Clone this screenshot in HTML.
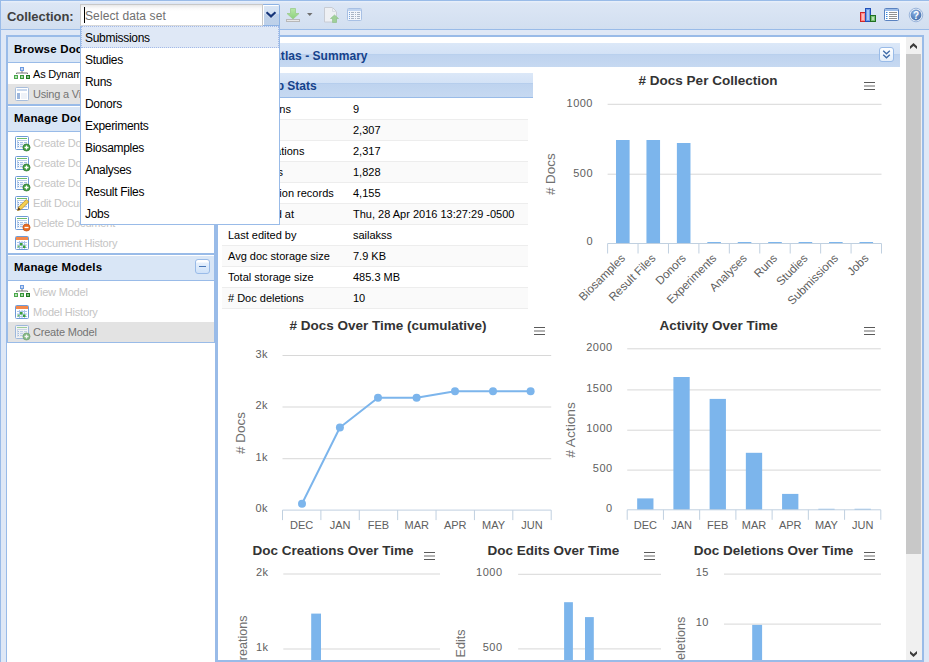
<!DOCTYPE html><html><head><meta charset="utf-8"><style>
*{box-sizing:border-box;margin:0;padding:0}
html,body{width:929px;height:662px;overflow:hidden;background:#dfe8f6;font-family:"Liberation Sans",sans-serif;position:relative}
.a{position:absolute}
.t{position:absolute;white-space:nowrap;line-height:1}
svg{position:absolute;overflow:visible}
</style></head><body>
<div class="a" style="left:0px;top:0px;width:929px;height:30px;border-top:1px solid #99bbe8;border-bottom:1px solid #99bbe8;background:linear-gradient(#e6eefa 0,#e6eefa 1px,#dce6f5 2px,#d2dff0)"></div>
<div class="a" style="left:0px;top:0px;width:1px;height:662px;background:#99bbe8"></div>
<div class="t" style="left:7px;top:10px;font-size:13px;font-weight:bold;color:#404040;letter-spacing:-0.05px">Collection:</div>
<div class="a" style="left:80px;top:4px;width:183px;height:22px;border:1px solid #c8c8c8;border-bottom:1px solid #d8d8d8;border-right:1px solid #c8c8c8;background:linear-gradient(#e8e8e8 0,#f8f8f8 3px,#fff 6px)"></div>
<div class="t" style="left:85px;top:10px;font-size:12px;color:#707070;letter-spacing:0.1px">Select data set</div>
<div class="a" style="left:84px;top:7px;width:1px;height:16px;background:#000"></div>
<div class="a" style="left:263px;top:4px;width:17px;height:22px;background:linear-gradient(#dae6f5 0,#d2e0f2 45%,#bed1ea 46%,#bdd0e9 100%);border:1px solid #8db2e3;border-left:none;box-shadow:inset 1px 1px 0 #fff;border-radius:0 2px 0 0"></div>
<svg style="left:265px;top:11px" width="12" height="8"><path d="M1.5 1.5l4.5 4 4.5-4" stroke="#fff" stroke-width="3" fill="none" opacity=".7"/><path d="M1.5 1.2l4.5 4.2 4.5-4.2" stroke="#15357a" stroke-width="2.2" fill="none"/></svg>
<div class="a" style="left:6px;top:35px;width:210px;height:627px;border-left:1px solid #99bbe8;border-right:1px solid #99bbe8;border-top:1px solid #99bbe8;background:#fff"></div>
<div class="a" style="left:7px;top:36px;width:208px;height:307px;border:1px solid #99bbe8;border-top:none;background:#fff"></div>
<div class="a" style="left:7px;top:35px;width:208px;height:2px;background:#99bbe8"></div>
<div class="a" style="left:7px;top:37px;width:208px;height:25px;background:#d9e6f6;border-left:1px solid #99bbe8;border-right:1px solid #99bbe8"></div>
<div class="a" style="left:7px;top:62px;width:208px;height:1px;background:#99bbe8"></div>
<div class="t" style="left:14px;top:44px;font-size:11.5px;font-weight:bold;color:#000;letter-spacing:0.2px">Browse Documents</div>
<svg style="left:14px;top:66px" width="18" height="16"><rect x="6.5" y="1.5" width="3" height="3" fill="#c8d4f0" stroke="#6a9ae0" stroke-width="1"/><path d="M2.5 8V7h11v1M8 5v2" stroke="#777" stroke-width="1" fill="none"/><rect x="0.5" y="9.5" width="3" height="3" fill="#b8e0b8" stroke="#4aa84a" stroke-width="1"/><rect x="6.5" y="9.5" width="3" height="3" fill="#a8d8a8" stroke="#3a983a" stroke-width="1"/><rect x="12.5" y="9.5" width="3" height="3" fill="#88c088" stroke="#207820" stroke-width="1"/></svg>
<div class="t" style="left:33px;top:69px;font-size:11px;color:#000;letter-spacing:-0.2px">As Dynamic Tree</div>
<div class="a" style="left:8px;top:84px;width:206px;height:20px;background:#e3e3e3"></div>
<svg style="left:15px;top:87px" width="16" height="16"><rect x="0.5" y="0.5" width="13" height="13" rx="1" fill="#fff" stroke="#a8bedc"/><rect x="2" y="2" width="10" height="2" fill="#c8d8ee"/><rect x="2" y="6" width="3" height="6" fill="#9cb6dc"/><rect x="6" y="6" width="6" height="6" fill="#eef2f8"/></svg>
<div class="t" style="left:33px;top:89px;font-size:11px;color:#747474;letter-spacing:-0.2px">Using a View</div>
<div class="a" style="left:7px;top:104px;width:208px;height:2px;background:#99bbe8"></div>
<div class="a" style="left:8px;top:106px;width:206px;height:1px;background:#fff"></div>
<div class="a" style="left:7px;top:107px;width:208px;height:24px;background:#d9e6f6;border-left:1px solid #99bbe8;border-right:1px solid #99bbe8"></div>
<div class="a" style="left:7px;top:131px;width:208px;height:1px;background:#99bbe8"></div>
<div class="t" style="left:14px;top:113px;font-size:11.5px;font-weight:bold;color:#000;letter-spacing:0.2px">Manage Documents</div>
<svg style="left:15px;top:136px;opacity:1" width="16" height="16"><rect x="0.5" y="0.5" width="13" height="13" rx="1" fill="#fff" stroke="#6e9ad6"/><rect x="2" y="2" width="10" height="1" fill="#6cbc6c"/><rect x="2" y="4" width="10" height="1" fill="#b8cdea"/><rect x="2" y="4" width="1" height="8" fill="#b8cdea"/><rect x="3" y="6" width="1" height="1" fill="#7aa4dc"/><rect x="3" y="8" width="1" height="1" fill="#7aa4dc"/><rect x="3" y="10" width="1" height="1" fill="#7aa4dc"/><rect x="5" y="6" width="3" height="1" fill="#a8c2e8"/><rect x="5" y="8" width="3" height="1" fill="#a8c2e8"/><rect x="5" y="10" width="3" height="1" fill="#a8c2e8"/><rect x="9" y="6" width="3" height="1" fill="#a8c2e8"/><rect x="9" y="8" width="3" height="1" fill="#a8c2e8"/><rect x="9" y="10" width="3" height="1" fill="#a8c2e8"/><rect x="2" y="7" width="10" height="0.6" fill="#dbe6f6"/><rect x="2" y="9" width="10" height="0.6" fill="#dbe6f6"/><rect x="2" y="11" width="10" height="0.6" fill="#dbe6f6"/><circle cx="11.5" cy="11.5" r="3.6" fill="#3f9a3f" stroke="#2a6e2a" stroke-width="0.6"/><path d="M9.5 11.5h4M11.5 9.5v4" stroke="#fff" stroke-width="1.3"/></svg>
<div class="t" style="left:33px;top:138px;font-size:11px;color:#c4c4c4;letter-spacing:-0.2px">Create Document</div>
<svg style="left:15px;top:156px;opacity:1" width="16" height="16"><rect x="0.5" y="0.5" width="13" height="13" rx="1" fill="#fff" stroke="#6e9ad6"/><rect x="2" y="2" width="10" height="1" fill="#6cbc6c"/><rect x="2" y="4" width="10" height="1" fill="#b8cdea"/><rect x="2" y="4" width="1" height="8" fill="#b8cdea"/><rect x="3" y="6" width="1" height="1" fill="#7aa4dc"/><rect x="3" y="8" width="1" height="1" fill="#7aa4dc"/><rect x="3" y="10" width="1" height="1" fill="#7aa4dc"/><rect x="5" y="6" width="3" height="1" fill="#a8c2e8"/><rect x="5" y="8" width="3" height="1" fill="#a8c2e8"/><rect x="5" y="10" width="3" height="1" fill="#a8c2e8"/><rect x="9" y="6" width="3" height="1" fill="#a8c2e8"/><rect x="9" y="8" width="3" height="1" fill="#a8c2e8"/><rect x="9" y="10" width="3" height="1" fill="#a8c2e8"/><rect x="2" y="7" width="10" height="0.6" fill="#dbe6f6"/><rect x="2" y="9" width="10" height="0.6" fill="#dbe6f6"/><rect x="2" y="11" width="10" height="0.6" fill="#dbe6f6"/><circle cx="11.5" cy="11.5" r="3.6" fill="#3f9a3f" stroke="#2a6e2a" stroke-width="0.6"/><path d="M9.5 11.5h4M11.5 9.5v4" stroke="#fff" stroke-width="1.3"/></svg>
<div class="t" style="left:33px;top:158px;font-size:11px;color:#c4c4c4;letter-spacing:-0.2px">Create Document</div>
<svg style="left:15px;top:176px;opacity:1" width="16" height="16"><rect x="0.5" y="0.5" width="13" height="13" rx="1" fill="#fff" stroke="#6e9ad6"/><rect x="2" y="2" width="10" height="1" fill="#6cbc6c"/><rect x="2" y="4" width="10" height="1" fill="#b8cdea"/><rect x="2" y="4" width="1" height="8" fill="#b8cdea"/><rect x="3" y="6" width="1" height="1" fill="#7aa4dc"/><rect x="3" y="8" width="1" height="1" fill="#7aa4dc"/><rect x="3" y="10" width="1" height="1" fill="#7aa4dc"/><rect x="5" y="6" width="3" height="1" fill="#a8c2e8"/><rect x="5" y="8" width="3" height="1" fill="#a8c2e8"/><rect x="5" y="10" width="3" height="1" fill="#a8c2e8"/><rect x="9" y="6" width="3" height="1" fill="#a8c2e8"/><rect x="9" y="8" width="3" height="1" fill="#a8c2e8"/><rect x="9" y="10" width="3" height="1" fill="#a8c2e8"/><rect x="2" y="7" width="10" height="0.6" fill="#dbe6f6"/><rect x="2" y="9" width="10" height="0.6" fill="#dbe6f6"/><rect x="2" y="11" width="10" height="0.6" fill="#dbe6f6"/><circle cx="11.5" cy="11.5" r="3.6" fill="#3f9a3f" stroke="#2a6e2a" stroke-width="0.6"/><path d="M9.5 11.5h4M11.5 9.5v4" stroke="#fff" stroke-width="1.3"/></svg>
<div class="t" style="left:33px;top:178px;font-size:11px;color:#c4c4c4;letter-spacing:-0.2px">Create Document</div>
<svg style="left:15px;top:196px;opacity:1" width="16" height="16"><rect x="0.5" y="0.5" width="13" height="13" rx="1" fill="#fff" stroke="#6e9ad6"/><rect x="2" y="2" width="10" height="1" fill="#6cbc6c"/><rect x="2" y="4" width="10" height="1" fill="#b8cdea"/><rect x="2" y="4" width="1" height="8" fill="#b8cdea"/><rect x="3" y="6" width="1" height="1" fill="#7aa4dc"/><rect x="3" y="8" width="1" height="1" fill="#7aa4dc"/><rect x="3" y="10" width="1" height="1" fill="#7aa4dc"/><rect x="5" y="6" width="3" height="1" fill="#a8c2e8"/><rect x="5" y="8" width="3" height="1" fill="#a8c2e8"/><rect x="5" y="10" width="3" height="1" fill="#a8c2e8"/><rect x="9" y="6" width="3" height="1" fill="#a8c2e8"/><rect x="9" y="8" width="3" height="1" fill="#a8c2e8"/><rect x="9" y="10" width="3" height="1" fill="#a8c2e8"/><rect x="2" y="7" width="10" height="0.6" fill="#dbe6f6"/><rect x="2" y="9" width="10" height="0.6" fill="#dbe6f6"/><rect x="2" y="11" width="10" height="0.6" fill="#dbe6f6"/><path d="M2.5 14.5l1-3.2 7.8-7.8 2.4 2.4-7.8 7.8z" fill="#f4d050" stroke="#b08020" stroke-width="0.7"/><path d="M2.5 14.5l1-3.2 2.2 2.2z" fill="#604020"/></svg>
<div class="t" style="left:33px;top:198px;font-size:11px;color:#c4c4c4;letter-spacing:-0.2px">Edit Document</div>
<svg style="left:15px;top:216px;opacity:1" width="16" height="16"><rect x="0.5" y="0.5" width="13" height="13" rx="1" fill="#fff" stroke="#6e9ad6"/><rect x="2" y="2" width="10" height="1" fill="#6cbc6c"/><rect x="2" y="4" width="10" height="1" fill="#b8cdea"/><rect x="2" y="4" width="1" height="8" fill="#b8cdea"/><rect x="3" y="6" width="1" height="1" fill="#7aa4dc"/><rect x="3" y="8" width="1" height="1" fill="#7aa4dc"/><rect x="3" y="10" width="1" height="1" fill="#7aa4dc"/><rect x="5" y="6" width="3" height="1" fill="#a8c2e8"/><rect x="5" y="8" width="3" height="1" fill="#a8c2e8"/><rect x="5" y="10" width="3" height="1" fill="#a8c2e8"/><rect x="9" y="6" width="3" height="1" fill="#a8c2e8"/><rect x="9" y="8" width="3" height="1" fill="#a8c2e8"/><rect x="9" y="10" width="3" height="1" fill="#a8c2e8"/><rect x="2" y="7" width="10" height="0.6" fill="#dbe6f6"/><rect x="2" y="9" width="10" height="0.6" fill="#dbe6f6"/><rect x="2" y="11" width="10" height="0.6" fill="#dbe6f6"/><circle cx="11.5" cy="11.5" r="3.6" fill="#e86a20" stroke="#b84a10" stroke-width="0.6"/><path d="M9.5 11.5h4" stroke="#fff" stroke-width="1.3"/></svg>
<div class="t" style="left:33px;top:218px;font-size:11px;color:#c4c4c4;letter-spacing:-0.2px">Delete Document</div>
<svg style="left:15px;top:236px" width="16" height="16"><rect x="0.5" y="0.5" width="13" height="13" rx="1" fill="#fff" stroke="#6e9ad6"/><rect x="1" y="1" width="12" height="3" fill="#f4884a"/><path d="M2 6.5h10M2 9h10M2 11.5h10M4.5 5v8M7 5v8M9.5 5v8" stroke="#a8c4ea"/><rect x="5" y="7" width="2.5" height="2.5" fill="#3aa03a"/><rect x="8" y="9.5" width="2.5" height="2.5" fill="#3aa03a"/><rect x="2.5" y="9.5" width="2" height="2" fill="#6cbc6c"/></svg>
<div class="t" style="left:33px;top:238px;font-size:11px;color:#c4c4c4;letter-spacing:-0.2px">Document History</div>
<div class="a" style="left:7px;top:253px;width:208px;height:2px;background:#99bbe8"></div>
<div class="a" style="left:8px;top:255px;width:206px;height:1px;background:#fff"></div>
<div class="a" style="left:7px;top:256px;width:208px;height:24px;background:#d9e6f6;border-left:1px solid #99bbe8;border-right:1px solid #99bbe8"></div>
<div class="a" style="left:7px;top:280px;width:208px;height:1px;background:#99bbe8"></div>
<div class="t" style="left:14px;top:262px;font-size:11.5px;font-weight:bold;color:#000;letter-spacing:0.2px">Manage Models</div>
<div class="a" style="left:195px;top:259px;width:15px;height:15px;border:1px solid #99bbe8;border-radius:3px;background:linear-gradient(#fff 0,#fff 2px,#e6f0fc 3px,#cfe2f9)"></div>
<div class="a" style="left:199px;top:266px;width:7px;height:1px;background:#4a78b8"></div>
<svg style="left:14px;top:284px" width="18" height="16"><rect x="6.5" y="1.5" width="3" height="3" fill="#c8d4f0" stroke="#6a9ae0" stroke-width="1"/><path d="M2.5 8V7h11v1M8 5v2" stroke="#777" stroke-width="1" fill="none"/><rect x="0.5" y="9.5" width="3" height="3" fill="#b8e0b8" stroke="#4aa84a" stroke-width="1"/><rect x="6.5" y="9.5" width="3" height="3" fill="#a8d8a8" stroke="#3a983a" stroke-width="1"/><rect x="12.5" y="9.5" width="3" height="3" fill="#88c088" stroke="#207820" stroke-width="1"/></svg>
<div class="t" style="left:33px;top:287px;font-size:11px;color:#c4c4c4;letter-spacing:-0.2px">View Model</div>
<svg style="left:15px;top:305px" width="16" height="16"><rect x="0.5" y="0.5" width="13" height="13" rx="1" fill="#fff" stroke="#6e9ad6"/><rect x="1" y="1" width="12" height="3" fill="#f4884a"/><path d="M2 6.5h10M2 9h10M2 11.5h10M4.5 5v8M7 5v8M9.5 5v8" stroke="#a8c4ea"/><rect x="5" y="7" width="2.5" height="2.5" fill="#3aa03a"/><rect x="8" y="9.5" width="2.5" height="2.5" fill="#3aa03a"/><rect x="2.5" y="9.5" width="2" height="2" fill="#6cbc6c"/></svg>
<div class="t" style="left:33px;top:307px;font-size:11px;color:#c4c4c4;letter-spacing:-0.2px">Model History</div>
<div class="a" style="left:8px;top:322px;width:206px;height:20px;background:#e3e3e3"></div>
<svg style="left:15px;top:325px;opacity:0.6" width="16" height="16"><rect x="0.5" y="0.5" width="13" height="13" rx="1" fill="#fff" stroke="#6e9ad6"/><rect x="2" y="2" width="10" height="1" fill="#6cbc6c"/><rect x="2" y="4" width="10" height="1" fill="#b8cdea"/><rect x="2" y="4" width="1" height="8" fill="#b8cdea"/><rect x="3" y="6" width="1" height="1" fill="#7aa4dc"/><rect x="3" y="8" width="1" height="1" fill="#7aa4dc"/><rect x="3" y="10" width="1" height="1" fill="#7aa4dc"/><rect x="5" y="6" width="3" height="1" fill="#a8c2e8"/><rect x="5" y="8" width="3" height="1" fill="#a8c2e8"/><rect x="5" y="10" width="3" height="1" fill="#a8c2e8"/><rect x="9" y="6" width="3" height="1" fill="#a8c2e8"/><rect x="9" y="8" width="3" height="1" fill="#a8c2e8"/><rect x="9" y="10" width="3" height="1" fill="#a8c2e8"/><rect x="2" y="7" width="10" height="0.6" fill="#dbe6f6"/><rect x="2" y="9" width="10" height="0.6" fill="#dbe6f6"/><rect x="2" y="11" width="10" height="0.6" fill="#dbe6f6"/><circle cx="11.5" cy="11.5" r="3.6" fill="#3f9a3f" stroke="#2a6e2a" stroke-width="0.6"/><path d="M9.5 11.5h4M11.5 9.5v4" stroke="#fff" stroke-width="1.3"/></svg>
<div class="t" style="left:33px;top:327px;font-size:11px;color:#747474;letter-spacing:-0.2px">Create Model</div>
<div class="a" style="left:7px;top:342px;width:208px;height:1px;background:#99bbe8"></div>
<div class="a" style="left:216px;top:35px;width:708px;height:627px;border:2px solid #99bbe8;background:#fff"></div>
<div class="a" style="left:220px;top:43px;width:680px;height:24px;background:linear-gradient(#dce8f8 0,#d3e2f6 11px,#b4cdec 11px,#bed3ef 12px,#c6d9f1 100%)"></div>
<div class="t" style="left:243px;top:50px;font-size:12px;font-weight:bold;color:#15428b;letter-spacing:0.05px">Data Atlas - Summary</div>
<div class="a" style="left:879px;top:47px;width:15px;height:15px;border:1px solid #99bbe8;border-radius:3px;background:linear-gradient(#fff,#e4eefa)"></div>
<svg style="left:882px;top:49px" width="10" height="12"><path d="M1.2 1.8l3.3 3 3.3-3M1.2 5.8l3.3 3 3.3-3" stroke="#3d6aa8" stroke-width="1.3" fill="none"/></svg>
<div class="a" style="left:906px;top:37px;width:16px;height:623px;background:#f0f0f0"></div>
<div class="a" style="left:906px;top:54px;width:15px;height:500px;background:#c8c8c8"></div>
<svg style="left:909px;top:42px" width="10" height="9"><path d="M1 4.2L4.5 1 8 4.2V7L4.5 4 1 7z" fill="#3c3c3c"/></svg>
<svg style="left:909px;top:650px" width="10" height="9"><path d="M1 1L4.5 4 8 1V3.8L4.5 7 1 3.8z" fill="#3c3c3c"/></svg>
<div class="a" style="left:222px;top:73px;width:311px;height:25px;background:linear-gradient(#dce8f8 0,#d3e2f6 10px,#adc8ea 10px,#bed3ef 11px,#c6d9f1 100%);border-bottom:1px solid #99bbe8"></div>
<div class="t" style="left:248px;top:80px;font-size:12px;font-weight:bold;color:#15428b">Group Stats</div>
<div class="a" style="left:222px;top:99px;width:306px;height:21px;background:#fff;border-bottom:1px solid #ededed"></div>
<div class="t" style="left:228px;top:104px;font-size:11px;color:#000"># Collections</div>
<div class="t" style="left:353px;top:104px;font-size:11px;color:#000">9</div>
<div class="a" style="left:222px;top:120px;width:306px;height:21px;background:#fafafa;border-bottom:1px solid #ededed"></div>
<div class="t" style="left:228px;top:125px;font-size:11px;color:#000"># Docs</div>
<div class="t" style="left:353px;top:125px;font-size:11px;color:#000">2,307</div>
<div class="a" style="left:222px;top:141px;width:306px;height:21px;background:#fff;border-bottom:1px solid #ededed"></div>
<div class="t" style="left:228px;top:146px;font-size:11px;color:#000"># Doc creations</div>
<div class="t" style="left:353px;top:146px;font-size:11px;color:#000">2,317</div>
<div class="a" style="left:222px;top:162px;width:306px;height:21px;background:#fafafa;border-bottom:1px solid #ededed"></div>
<div class="t" style="left:228px;top:167px;font-size:11px;color:#000"># Doc edits</div>
<div class="t" style="left:353px;top:167px;font-size:11px;color:#000">1,828</div>
<div class="a" style="left:222px;top:183px;width:306px;height:21px;background:#fff;border-bottom:1px solid #ededed"></div>
<div class="t" style="left:228px;top:188px;font-size:11px;color:#000"># Submission records</div>
<div class="t" style="left:353px;top:188px;font-size:11px;color:#000">4,155</div>
<div class="a" style="left:222px;top:204px;width:306px;height:21px;background:#fafafa;border-bottom:1px solid #ededed"></div>
<div class="t" style="left:228px;top:209px;font-size:11px;color:#000">Last edited at</div>
<div class="t" style="left:353px;top:209px;font-size:11px;color:#000">Thu, 28 Apr 2016 13:27:29 -0500</div>
<div class="a" style="left:222px;top:225px;width:306px;height:21px;background:#fff;border-bottom:1px solid #ededed"></div>
<div class="t" style="left:228px;top:230px;font-size:11px;color:#000">Last edited by</div>
<div class="t" style="left:353px;top:230px;font-size:11px;color:#000">sailakss</div>
<div class="a" style="left:222px;top:246px;width:306px;height:21px;background:#fafafa;border-bottom:1px solid #ededed"></div>
<div class="t" style="left:228px;top:251px;font-size:11px;color:#000">Avg doc storage size</div>
<div class="t" style="left:353px;top:251px;font-size:11px;color:#000">7.9 KB</div>
<div class="a" style="left:222px;top:267px;width:306px;height:21px;background:#fff;border-bottom:1px solid #ededed"></div>
<div class="t" style="left:228px;top:272px;font-size:11px;color:#000">Total storage size</div>
<div class="t" style="left:353px;top:272px;font-size:11px;color:#000">485.3 MB</div>
<div class="a" style="left:222px;top:288px;width:306px;height:21px;background:#fafafa;border-bottom:1px solid #ededed"></div>
<div class="t" style="left:228px;top:293px;font-size:11px;color:#000"># Doc deletions</div>
<div class="t" style="left:353px;top:293px;font-size:11px;color:#000">10</div>
<svg style="left:0;top:0;overflow:hidden" width="921" height="660">
<text x="708" y="85" text-anchor="middle" font-size="13.5" font-weight="bold" fill="#333" font-family="Liberation Sans"># Docs Per Collection</text>
<rect x="864" y="82" width="11" height="1" fill="#5a5a5a"/>
<rect x="864" y="85" width="11" height="2" fill="#b4b4b4"/>
<rect x="864" y="89" width="11" height="1" fill="#5a5a5a"/>
<rect x="607.6" y="103.8" width="273.9" height="1" fill="#d8d8d8"/>
<text x="593.0" y="107.3" text-anchor="end" font-size="11" letter-spacing="0.5" fill="#606060" font-family="Liberation Sans">1000</text>
<rect x="607.6" y="173.7" width="273.9" height="1" fill="#d8d8d8"/>
<text x="593.0" y="177.2" text-anchor="end" font-size="11" letter-spacing="0.5" fill="#606060" font-family="Liberation Sans">500</text>
<text x="593.0" y="244.5" text-anchor="end" font-size="11" letter-spacing="0.5" fill="#606060" font-family="Liberation Sans">0</text>
<text x="551" y="174.2" transform="rotate(-90 551 174.2)" text-anchor="middle" dominant-baseline="central" font-size="12" fill="#707070" textLength="41.8" lengthAdjust="spacingAndGlyphs" font-family="Liberation Sans"># Docs</text>
<rect x="616.0166666666668" y="140" width="13.6" height="103.5" fill="#7cb5ec"/>
<rect x="646.45" y="140" width="13.6" height="103.5" fill="#7cb5ec"/>
<rect x="676.8833333333334" y="143" width="13.6" height="100.5" fill="#7cb5ec"/>
<rect x="707.3166666666667" y="242" width="13.6" height="1.5" fill="#7cb5ec"/>
<rect x="737.75" y="242" width="13.6" height="1.5" fill="#7cb5ec"/>
<rect x="768.1833333333334" y="242" width="13.6" height="1.5" fill="#7cb5ec"/>
<rect x="798.6166666666667" y="242" width="13.6" height="1.5" fill="#7cb5ec"/>
<rect x="829.0500000000001" y="242" width="13.6" height="1.5" fill="#7cb5ec"/>
<rect x="859.4833333333333" y="242" width="13.6" height="1.5" fill="#7cb5ec"/>
<rect x="607.6" y="243.0" width="273.9" height="1" fill="#c0d0e0"/>
<rect x="607.1" y="243.5" width="1" height="10" fill="#c0d0e0"/>
<rect x="637.5333333333333" y="243.5" width="1" height="10" fill="#c0d0e0"/>
<rect x="667.9666666666667" y="243.5" width="1" height="10" fill="#c0d0e0"/>
<rect x="698.4" y="243.5" width="1" height="10" fill="#c0d0e0"/>
<rect x="728.8333333333334" y="243.5" width="1" height="10" fill="#c0d0e0"/>
<rect x="759.2666666666667" y="243.5" width="1" height="10" fill="#c0d0e0"/>
<rect x="789.7" y="243.5" width="1" height="10" fill="#c0d0e0"/>
<rect x="820.1333333333333" y="243.5" width="1" height="10" fill="#c0d0e0"/>
<rect x="850.5666666666666" y="243.5" width="1" height="10" fill="#c0d0e0"/>
<rect x="881.0" y="243.5" width="1" height="10" fill="#c0d0e0"/>
<text x="625.8166666666667" y="259.0" transform="rotate(-45 625.8166666666667 259.0)" text-anchor="end" font-size="11.6" fill="#606060" font-family="Liberation Sans">Biosamples</text>
<text x="656.25" y="259.0" transform="rotate(-45 656.25 259.0)" text-anchor="end" font-size="11.6" fill="#606060" font-family="Liberation Sans">Result Files</text>
<text x="686.6833333333334" y="259.0" transform="rotate(-45 686.6833333333334 259.0)" text-anchor="end" font-size="11.6" fill="#606060" font-family="Liberation Sans">Donors</text>
<text x="717.1166666666667" y="259.0" transform="rotate(-45 717.1166666666667 259.0)" text-anchor="end" font-size="11.6" fill="#606060" font-family="Liberation Sans">Experiments</text>
<text x="747.55" y="259.0" transform="rotate(-45 747.55 259.0)" text-anchor="end" font-size="11.6" fill="#606060" font-family="Liberation Sans">Analyses</text>
<text x="777.9833333333333" y="259.0" transform="rotate(-45 777.9833333333333 259.0)" text-anchor="end" font-size="11.6" fill="#606060" font-family="Liberation Sans">Runs</text>
<text x="808.4166666666666" y="259.0" transform="rotate(-45 808.4166666666666 259.0)" text-anchor="end" font-size="11.6" fill="#606060" font-family="Liberation Sans">Studies</text>
<text x="838.85" y="259.0" transform="rotate(-45 838.85 259.0)" text-anchor="end" font-size="11.6" fill="#606060" font-family="Liberation Sans">Submissions</text>
<text x="869.2833333333333" y="259.0" transform="rotate(-45 869.2833333333333 259.0)" text-anchor="end" font-size="11.6" fill="#606060" font-family="Liberation Sans">Jobs</text>
<text x="388" y="330" text-anchor="middle" font-size="13.5" font-weight="bold" fill="#333" font-family="Liberation Sans"># Docs Over Time (cumulative)</text>
<rect x="534" y="327" width="11" height="1" fill="#5a5a5a"/>
<rect x="534" y="330" width="11" height="2" fill="#b4b4b4"/>
<rect x="534" y="334" width="11" height="1" fill="#5a5a5a"/>
<rect x="282.5" y="355.0" width="268.70000000000005" height="1" fill="#d8d8d8"/>
<text x="268.1" y="357.5" text-anchor="end" font-size="11" letter-spacing="0.5" fill="#606060" font-family="Liberation Sans">3k</text>
<rect x="282.5" y="406.5" width="268.70000000000005" height="1" fill="#d8d8d8"/>
<text x="268.1" y="409" text-anchor="end" font-size="11" letter-spacing="0.5" fill="#606060" font-family="Liberation Sans">2k</text>
<rect x="282.5" y="458.2" width="268.70000000000005" height="1" fill="#d8d8d8"/>
<text x="268.1" y="460.7" text-anchor="end" font-size="11" letter-spacing="0.5" fill="#606060" font-family="Liberation Sans">1k</text>
<text x="268.1" y="512" text-anchor="end" font-size="11" letter-spacing="0.5" fill="#606060" font-family="Liberation Sans">0k</text>
<text x="241" y="433" transform="rotate(-90 241 433)" text-anchor="middle" dominant-baseline="central" font-size="12" fill="#707070" textLength="41.8" lengthAdjust="spacingAndGlyphs" font-family="Liberation Sans"># Docs</text>
<polyline points="302,503.8 339.9,427.5 378,397.8 416.6,397.8 455,391.3 493,391.3 530.6,391.3" fill="none" stroke="#7cb5ec" stroke-width="2" stroke-linejoin="round"/>
<circle cx="302" cy="503.8" r="4" fill="#7cb5ec"/>
<circle cx="339.9" cy="427.5" r="4" fill="#7cb5ec"/>
<circle cx="378" cy="397.8" r="4" fill="#7cb5ec"/>
<circle cx="416.6" cy="397.8" r="4" fill="#7cb5ec"/>
<circle cx="455" cy="391.3" r="4" fill="#7cb5ec"/>
<circle cx="493" cy="391.3" r="4" fill="#7cb5ec"/>
<circle cx="530.6" cy="391.3" r="4" fill="#7cb5ec"/>
<rect x="282.5" y="509.6" width="268.70000000000005" height="1" fill="#c0d0e0"/>
<rect x="282.0" y="510.1" width="1" height="10" fill="#c0d0e0"/>
<rect x="320.3857142857143" y="510.1" width="1" height="10" fill="#c0d0e0"/>
<rect x="358.7714285714286" y="510.1" width="1" height="10" fill="#c0d0e0"/>
<rect x="397.15714285714284" y="510.1" width="1" height="10" fill="#c0d0e0"/>
<rect x="435.5428571428572" y="510.1" width="1" height="10" fill="#c0d0e0"/>
<rect x="473.92857142857144" y="510.1" width="1" height="10" fill="#c0d0e0"/>
<rect x="512.3142857142857" y="510.1" width="1" height="10" fill="#c0d0e0"/>
<rect x="550.7" y="510.1" width="1" height="10" fill="#c0d0e0"/>
<text x="301.6928571428571" y="529.1" text-anchor="middle" font-size="11" fill="#606060" font-family="Liberation Sans">DEC</text>
<text x="340.0785714285714" y="529.1" text-anchor="middle" font-size="11" fill="#606060" font-family="Liberation Sans">JAN</text>
<text x="378.4642857142857" y="529.1" text-anchor="middle" font-size="11" fill="#606060" font-family="Liberation Sans">FEB</text>
<text x="416.85" y="529.1" text-anchor="middle" font-size="11" fill="#606060" font-family="Liberation Sans">MAR</text>
<text x="455.2357142857143" y="529.1" text-anchor="middle" font-size="11" fill="#606060" font-family="Liberation Sans">APR</text>
<text x="493.6214285714286" y="529.1" text-anchor="middle" font-size="11" fill="#606060" font-family="Liberation Sans">MAY</text>
<text x="532.0071428571429" y="529.1" text-anchor="middle" font-size="11" fill="#606060" font-family="Liberation Sans">JUN</text>
<text x="718.6" y="329.6" text-anchor="middle" font-size="13.5" font-weight="bold" fill="#333" font-family="Liberation Sans">Activity Over Time</text>
<rect x="864" y="327" width="11" height="1" fill="#5a5a5a"/>
<rect x="864" y="330" width="11" height="2" fill="#b4b4b4"/>
<rect x="864" y="334" width="11" height="1" fill="#5a5a5a"/>
<rect x="627.2" y="348.3" width="253.5999999999999" height="1" fill="#d8d8d8"/>
<text x="612.7" y="350.8" text-anchor="end" font-size="11" letter-spacing="0.5" fill="#606060" font-family="Liberation Sans">2000</text>
<rect x="627.2" y="389.4" width="253.5999999999999" height="1" fill="#d8d8d8"/>
<text x="612.7" y="391.9" text-anchor="end" font-size="11" letter-spacing="0.5" fill="#606060" font-family="Liberation Sans">1500</text>
<rect x="627.2" y="429.7" width="253.5999999999999" height="1" fill="#d8d8d8"/>
<text x="612.7" y="432.2" text-anchor="end" font-size="11" letter-spacing="0.5" fill="#606060" font-family="Liberation Sans">1000</text>
<rect x="627.2" y="469.6" width="253.5999999999999" height="1" fill="#d8d8d8"/>
<text x="612.7" y="472.1" text-anchor="end" font-size="11" letter-spacing="0.5" fill="#606060" font-family="Liberation Sans">500</text>
<text x="612.7" y="511.8" text-anchor="end" font-size="11" letter-spacing="0.5" fill="#606060" font-family="Liberation Sans">0</text>
<text x="570.5" y="430" transform="rotate(-90 570.5 430)" text-anchor="middle" dominant-baseline="central" font-size="12" fill="#707070" textLength="55.7" lengthAdjust="spacingAndGlyphs" font-family="Liberation Sans"># Actions</text>
<rect x="637.1642857142858" y="498.4" width="16.3" height="11.400000000000034" fill="#7cb5ec"/>
<rect x="673.3928571428572" y="377" width="16.3" height="132.8" fill="#7cb5ec"/>
<rect x="709.6214285714286" y="398.9" width="16.3" height="110.90000000000003" fill="#7cb5ec"/>
<rect x="745.85" y="452.8" width="16.3" height="57.0" fill="#7cb5ec"/>
<rect x="782.0785714285714" y="493.9" width="16.3" height="15.900000000000034" fill="#7cb5ec"/>
<rect x="818.3071428571428" y="508.8" width="16.3" height="1.0" fill="#7cb5ec"/>
<rect x="854.5357142857142" y="508.8" width="16.3" height="1.0" fill="#7cb5ec"/>
<rect x="627.2" y="509.3" width="253.5999999999999" height="1" fill="#c0d0e0"/>
<rect x="626.7" y="509.8" width="1" height="10" fill="#c0d0e0"/>
<rect x="662.9285714285714" y="509.8" width="1" height="10" fill="#c0d0e0"/>
<rect x="699.1571428571428" y="509.8" width="1" height="10" fill="#c0d0e0"/>
<rect x="735.3857142857142" y="509.8" width="1" height="10" fill="#c0d0e0"/>
<rect x="771.6142857142856" y="509.8" width="1" height="10" fill="#c0d0e0"/>
<rect x="807.8428571428572" y="509.8" width="1" height="10" fill="#c0d0e0"/>
<rect x="844.0714285714286" y="509.8" width="1" height="10" fill="#c0d0e0"/>
<rect x="880.3" y="509.8" width="1" height="10" fill="#c0d0e0"/>
<text x="645.3142857142858" y="528.8" text-anchor="middle" font-size="11" fill="#606060" font-family="Liberation Sans">DEC</text>
<text x="681.5428571428572" y="528.8" text-anchor="middle" font-size="11" fill="#606060" font-family="Liberation Sans">JAN</text>
<text x="717.7714285714286" y="528.8" text-anchor="middle" font-size="11" fill="#606060" font-family="Liberation Sans">FEB</text>
<text x="754.0" y="528.8" text-anchor="middle" font-size="11" fill="#606060" font-family="Liberation Sans">MAR</text>
<text x="790.2285714285714" y="528.8" text-anchor="middle" font-size="11" fill="#606060" font-family="Liberation Sans">APR</text>
<text x="826.4571428571428" y="528.8" text-anchor="middle" font-size="11" fill="#606060" font-family="Liberation Sans">MAY</text>
<text x="862.6857142857142" y="528.8" text-anchor="middle" font-size="11" fill="#606060" font-family="Liberation Sans">JUN</text>
<text x="333" y="555" text-anchor="middle" font-size="13.5" font-weight="bold" fill="#333" font-family="Liberation Sans">Doc Creations Over Time</text>
<rect x="424" y="552" width="11" height="1" fill="#5a5a5a"/>
<rect x="424" y="555" width="11" height="2" fill="#b4b4b4"/>
<rect x="424" y="559" width="11" height="1" fill="#5a5a5a"/>
<rect x="283.3" y="573.5" width="156.7" height="1" fill="#d8d8d8"/>
<text x="268.5" y="576" text-anchor="end" font-size="11" letter-spacing="0.5" fill="#606060" font-family="Liberation Sans">2k</text>
<rect x="283.3" y="648.5" width="156.7" height="1" fill="#d8d8d8"/>
<text x="268.5" y="651" text-anchor="end" font-size="11" letter-spacing="0.5" fill="#606060" font-family="Liberation Sans">1k</text>
<rect x="311.2" y="613.6" width="9.8" height="60" fill="#7cb5ec"/>
<text x="242.6" y="615.4" transform="rotate(-90 242.6 615.4)" text-anchor="end" dominant-baseline="central" font-size="12.6" fill="#707070" font-family="Liberation Sans"># Doc Creations</text>
<text x="553.3" y="555.1" text-anchor="middle" font-size="13.5" font-weight="bold" fill="#333" font-family="Liberation Sans">Doc Edits Over Time</text>
<rect x="644" y="552" width="11" height="1" fill="#5a5a5a"/>
<rect x="644" y="555" width="11" height="2" fill="#b4b4b4"/>
<rect x="644" y="559" width="11" height="1" fill="#5a5a5a"/>
<rect x="518.1" y="573.8" width="142.89999999999998" height="1" fill="#d8d8d8"/>
<text x="502.6" y="576.3" text-anchor="end" font-size="11" letter-spacing="0.5" fill="#606060" font-family="Liberation Sans">1000</text>
<rect x="518.1" y="648.4" width="142.89999999999998" height="1" fill="#d8d8d8"/>
<text x="502.6" y="650.9" text-anchor="end" font-size="11" letter-spacing="0.5" fill="#606060" font-family="Liberation Sans">500</text>
<rect x="564.1" y="602.2" width="8.8" height="70" fill="#7cb5ec"/>
<rect x="585" y="617.1" width="8.8" height="60" fill="#7cb5ec"/>
<text x="461" y="629.4" transform="rotate(-90 461 629.4)" text-anchor="end" dominant-baseline="central" font-size="12.6" fill="#707070" font-family="Liberation Sans"># Doc Edits</text>
<text x="773.6" y="555.1" text-anchor="middle" font-size="13.5" font-weight="bold" fill="#333" font-family="Liberation Sans">Doc Deletions Over Time</text>
<rect x="864" y="552" width="11" height="1" fill="#5a5a5a"/>
<rect x="864" y="555" width="11" height="2" fill="#b4b4b4"/>
<rect x="864" y="559" width="11" height="1" fill="#5a5a5a"/>
<rect x="724" y="573.6" width="157" height="1" fill="#d8d8d8"/>
<text x="708.9" y="576.1" text-anchor="end" font-size="11" letter-spacing="0.5" fill="#606060" font-family="Liberation Sans">15</text>
<rect x="724" y="623.6" width="157" height="1" fill="#d8d8d8"/>
<text x="708.9" y="626.1" text-anchor="end" font-size="11" letter-spacing="0.5" fill="#606060" font-family="Liberation Sans">10</text>
<rect x="752.2" y="624.9" width="9.9" height="60" fill="#7cb5ec"/>
<text x="681.5" y="616.7" transform="rotate(-90 681.5 616.7)" text-anchor="end" dominant-baseline="central" font-size="12.6" fill="#707070" font-family="Liberation Sans"># Doc Deletions</text>
</svg>
<div class="a" style="left:80px;top:26px;width:200px;height:199px;border:1px solid #99bbe8;border-top:none;background:#fff"></div>
<div class="a" style="left:81px;top:26px;width:198px;height:22px;background:#dfe8f6;border:1px dotted #a3bae9"></div>
<div class="t" style="left:85px;top:32px;font-size:12px;color:#000;letter-spacing:-0.3px">Submissions</div>
<div class="t" style="left:85px;top:54px;font-size:12px;color:#000;letter-spacing:-0.3px">Studies</div>
<div class="t" style="left:85px;top:76px;font-size:12px;color:#000;letter-spacing:-0.3px">Runs</div>
<div class="t" style="left:85px;top:98px;font-size:12px;color:#000;letter-spacing:-0.3px">Donors</div>
<div class="t" style="left:85px;top:120px;font-size:12px;color:#000;letter-spacing:-0.3px">Experiments</div>
<div class="t" style="left:85px;top:142px;font-size:12px;color:#000;letter-spacing:-0.3px">Biosamples</div>
<div class="t" style="left:85px;top:164px;font-size:12px;color:#000;letter-spacing:-0.3px">Analyses</div>
<div class="t" style="left:85px;top:186px;font-size:12px;color:#000;letter-spacing:-0.3px">Result Files</div>
<div class="t" style="left:85px;top:208px;font-size:12px;color:#000;letter-spacing:-0.3px">Jobs</div>
<svg style="left:860px;top:8px" width="17" height="15"><rect x="0.5" y="4.5" width="5" height="9" fill="#f88" stroke="#d02828"/><rect x="2" y="6" width="2" height="6" fill="#ffb8b8"/><rect x="5.5" y="0.5" width="5" height="13" fill="#6e9ce8" stroke="#2050b8"/><rect x="7" y="2" width="2" height="10" fill="#a8c8f4"/><rect x="10.5" y="7.5" width="5" height="6" fill="#78c078" stroke="#207020"/><rect x="12" y="9" width="2" height="3" fill="#b8e0b0"/></svg>
<svg style="left:884px;top:8px" width="16" height="14"><rect x="0.5" y="0.5" width="14" height="12" rx="1" fill="#fff" stroke="#5a82c0"/><rect x="1" y="1" width="13" height="2" fill="#9cbce8"/><path d="M5 4.5h8M5 6.5h8M5 8.5h8M5 10.5h8" stroke="#909090"/><path d="M2 4.5h1.5M2 6.5h1.5M2 8.5h1.5M2 10.5h1.5" stroke="#3a8ae0"/></svg>
<svg style="left:908px;top:7px" width="16" height="16"><defs><radialGradient id="hg" cx="0.4" cy="0.3" r="0.8"><stop offset="0" stop-color="#8ab0e4"/><stop offset="1" stop-color="#3e6aa8"/></radialGradient></defs><circle cx="8" cy="8" r="6.8" fill="#e4ecf8" stroke="#8aa8d4" stroke-width="0.8"/><circle cx="8" cy="8" r="5.4" fill="url(#hg)"/><text x="8" y="11.6" font-size="10" font-weight="bold" text-anchor="middle" fill="#fff" font-family="Liberation Sans">?</text></svg>
<svg style="left:286px;top:8px" width="16" height="16"><defs><linearGradient id="gd" x1="0" y1="0" x2="0" y2="1"><stop offset="0" stop-color="#b8e8a8"/><stop offset="1" stop-color="#8cd07c"/></defs><path d="M4.5 0.5h5v5h3.5l-6 5.5-6-5.5h3.5z" fill="url(#gd)" stroke="#9ccc8c" stroke-width="0.8"/><rect x="0.5" y="11.5" width="13" height="2" fill="#e8e8e8" stroke="#b8b8b8"/></svg>
<svg style="left:307px;top:13px" width="6" height="4"><path d="M0 0h5.5l-2.75 3z" fill="#707070"/></svg>
<svg style="left:324px;top:7px" width="16" height="16"><path d="M0.5 0.5h8l4 4v10.5h-12z" fill="#eef0f4" stroke="#c8ccd4"/><path d="M8.5 0.5v4h4" fill="none" stroke="#d8dce4"/><path d="M6.5 11.5l4-3.5 4 3.5h-2v4h-4v-4z" fill="#a0d098" stroke="#8cc084" stroke-width="0.6"/></svg>
<svg style="left:347px;top:8px" width="16" height="14"><rect x="0.5" y="0.5" width="14" height="12" rx="1" fill="#f2f6fc" stroke="#a8c0e4"/><rect x="1" y="1" width="13" height="2" fill="#c0d4f0"/><path d="M2 4.5h1M2 6.5h1M2 8.5h1M2 10.5h1" stroke="#7aa6e0"/><path d="M4 4.5h3M4 6.5h3M4 8.5h3M4 10.5h3M8 4.5h1M8 6.5h1M8 8.5h1M8 10.5h1M10 4.5h3M10 6.5h3M10 8.5h3M10 10.5h3" stroke="#a8b4c4"/></svg>
</body></html>
